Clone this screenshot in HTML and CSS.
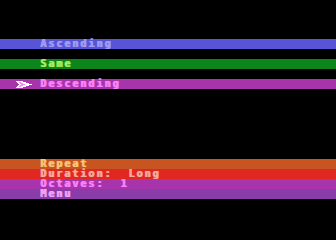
FILE: index.html
```html
<!DOCTYPE html>
<html>
<head>
<meta charset="utf-8">
<link rel="stylesheet" href="styles.css">
</head>
<body>
<div class="screen">
  <div class="top">
    <div class="row asc"><span class="mark"></span><span class="label">Ascending</span></div>
    <div class="row same"><span class="mark"></span><span class="label">Same</span></div>
    <div class="row desc"><span class="mark"><svg width="16" height="7" viewBox="0 0 16 7" shape-rendering="crispEdges">
      <path fill="#ffffff" d="M0 0h7v1H0zM1 1h2v1H1zM5 1h5v1H5zM2 2h2v1H2zM7 2h6v1H7zM3 3h2v1H3zM9 3h7v1H9zM2 4h2v1H2zM7 4h6v1H7zM1 5h2v1H1zM5 5h5v1H5zM0 6h7v1H0z"/>
      <path fill="#f884f8" d="M3 1h2v1H3zM4 2h3v1H4zM5 3h4v1H5zM4 4h3v1H4zM3 5h2v1H3z"/>
    </svg></span><span class="label">Descending</span></div>
  </div>
  <div class="bottom">
    <div class="row repeat"><span class="mark"></span><span class="label">Repeat</span></div>
    <div class="row dur"><span class="mark"></span><span class="label">Duration:  Long</span></div>
    <div class="row oct"><span class="mark"></span><span class="label">Octaves:  1</span></div>
    <div class="row menu"><span class="mark"></span><span class="label">Menu</span></div>
  </div>
</div>
</body>
</html>
```
FILE: styles.css
```css
html, body {
  margin: 0;
  padding: 0;
  background: #000;
}
.screen {
  width: 336px;
  height: 240px;
  background: #000;
  display: flex;
  flex-direction: column;
  padding-top: 39px;
  box-sizing: border-box;
}
.top {
  display: flex;
  flex-direction: column;
  gap: 10px;
}
.bottom {
  display: flex;
  flex-direction: column;
  margin-top: 70px;
}
.row {
  height: 10px;
  display: flex;
  align-items: center;
  padding-left: 16px;
  font-family: "DejaVu Sans Mono", monospace;
  font-weight: bold;
  font-size: 10px;
  line-height: 10px;
  letter-spacing: 2px;
  white-space: pre;
}
.mark {
  width: 24px;
  height: 10px;
  display: flex;
  align-items: center;
  flex: none;
}
.mark svg {
  display: block;
  margin-top: 1px;
}
.label {
  display: block;
  height: 10px;
  text-shadow: 1px 0 0 currentColor;
}
.asc { background: #5854d8; color: #a09cf4; }
.same { background: #0c861a; color: #a8ec60; }
.desc { background: #a834ac; color: #f884f8; }
.repeat { background: #c85422; color: #f8c474; }
.dur { background: #e02820; color: #f8a8a0; }
.oct { background: #a834ac; color: #f884f8; }
.menu { background: #8a3ca8; color: #f0a4f8; }
```
